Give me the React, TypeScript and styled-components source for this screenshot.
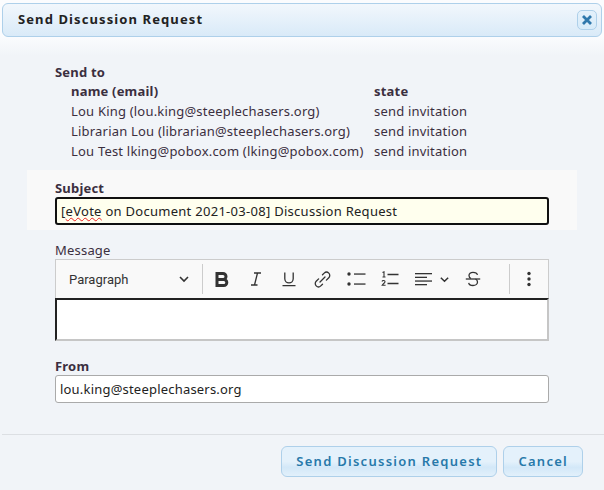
import React from "react";
import styled, { createGlobalStyle } from "styled-components";

const Global = createGlobalStyle`
  html, body { margin: 0; padding: 0; background: #f1f4f8; }
  * { box-sizing: border-box; }
`;

const Dialog = styled.div`
  width: 604px;
  height: 490px;
  overflow: hidden;
  display: flex;
  flex-direction: column;
  padding-top: 3px;
  font-family: "Noto Sans", "Open Sans", sans-serif;
  font-size: 13px;
  letter-spacing: 0.2px;
  color: #3b2f3f;
  background: linear-gradient(#fbfcfe 36px, #f1f4f8 56px);
`;

const TitleBar = styled.header`
  height: 34px;
  margin: 0 2px;
  padding: 0 4px 0 15px;
  display: flex;
  align-items: center;
  justify-content: space-between;
  border: 1px solid #aed0ea;
  border-radius: 6px;
  background: linear-gradient(#f2f7fc, #d9eaf8);
`;

const Title = styled.h1`
  margin: 0 0 2px;
  font-size: 13px;
  font-weight: 700;
  color: #222;
  letter-spacing: 1.1px;
`;

const CloseButton = styled.button`
  width: 20px;
  height: 20px;
  padding: 0;
  display: flex;
  align-items: center;
  justify-content: center;
  border: 1px solid #aed0ea;
  border-radius: 5px;
  background: linear-gradient(#e4f1fb, #d7ebf9);
`;

const Recipients = styled.section`
  padding: 25px 0 0 55px;
  height: 133px;
`;

const SectionLabel = styled.div`
  font-weight: 700;
  line-height: 20px;
  height: 19px;
`;

const RecipientTable = styled.div`
  margin-left: 16px;
  display: grid;
  grid-template-columns: 303px auto;
  grid-auto-rows: 20px;
  line-height: 20px;
`;

const HeadCell = styled.div`
  font-weight: 700;
`;

const Cell = styled.div`
  white-space: nowrap;
`;

const SubjectBand = styled.section`
  margin: 0 27px;
  height: 60px;
  padding: 8px 28px 0;
  background: #f9f9f9;
`;

const FieldLabel = styled.label<{ $bold?: boolean }>`
  display: block;
  height: 19px;
  line-height: 21px;
  font-weight: ${(p) => (p.$bold ? 700 : 400)};
`;

const TextBox = styled.div<{ $focused?: boolean }>`
  height: 28px;
  padding: 0 4px ${(p) => (p.$focused ? 0 : 1)}px;
  display: flex;
  align-items: center;
  white-space: pre;
  color: #222;
  letter-spacing: ${(p) => (p.$focused ? 0.28 : 0.2)}px;
  border-radius: 3px;
  border: ${(p) => (p.$focused ? "2px solid #111" : "1px solid #aaa")};
  background: ${(p) => (p.$focused ? "#ffffee" : "#fff")};
`;

const Misspelled = styled.span`
  text-decoration: underline wavy #e22;
  text-decoration-thickness: 1px;
  text-underline-offset: 1px;
`;

const MessageField = styled.section`
  margin: 10px 55px 0;
`;

const Editor = styled.div`
  height: 82px;
  display: flex;
  flex-direction: column;
`;

const Toolbar = styled.div`
  height: 39px;
  display: flex;
  align-items: center;
  background: #f9f9f9;
  border: 1px solid #ccc;
  border-bottom: 0;
  color: #333;
`;

const BlockSelect = styled.div`
  width: 146px;
  padding: 0 12px 0 13px;
  display: flex;
  align-items: center;
  justify-content: space-between;
  font-size: 13px;
  letter-spacing: 0;
  font-family: Roboto, sans-serif;
`;

const Divider = styled.span`
  width: 1px;
  height: 30px;
  background: #ccc;
`;

const ToolGroup = styled.div`
  display: flex;
  align-items: center;
  width: 307px;
  padding-left: 3px;
`;

const Tool = styled.span<{ $w?: number }>`
  display: flex;
  align-items: center;
  justify-content: center;
  gap: 7px;
  width: ${(p) => p.$w ?? 33.5}px;
  height: 24px;
`;

const Content = styled.div`
  flex: 1;
  background: #fff;
  border-top: 2px solid #222;
  border-left: 2px solid #222;
  border-right: 2px solid #c6c6c6;
  border-bottom: 2px solid #c6c6c6;
`;

const FromField = styled.section`
  margin: 15px 55px 0;
`;

const Footer = styled.footer`
  margin-top: 31px;
  margin-left: 2px;
  padding: 11px 21px 0 0;
  border-top: 1px solid #dcdfe3;
  display: flex;
  justify-content: flex-end;
  gap: 6px;
`;

const ActionButton = styled.button`
  height: 31px;
  padding: 0 14px 2px;
  font: 600 13px "Noto Sans", "Open Sans", sans-serif;
  letter-spacing: 1.27px;
  color: #2779aa;
  border: 1px solid #aed0ea;
  border-radius: 6px;
  background: linear-gradient(#e4f1fb 0%, #e4f1fb 50%, #d3e8f8 70%, #e2f0fb 100%);
`;

const Chevron = ({ size = 12 }: { size?: number }) => (
  <svg width={size} height={size} viewBox="0 0 12 12" fill="none" stroke="#333" strokeWidth="1.6">
    <path d="M2 4l4 4 4-4" />
  </svg>
);

const BoldIcon = () => (
  <svg width="16" height="17" viewBox="0 0 16 17" fill="none" stroke="#333" strokeWidth="3">
    <path d="M3 2.500h6a3 3 0 010 6H3zM3 8.500h6.800a3 3 0 010 6H3z" />
  </svg>
);

const ItalicIcon = () => (
  <svg width="16" height="16" viewBox="0 0 16 16" fill="none" stroke="#333" strokeWidth="1.3">
    <path d="M6 2h7M3 14h6.500M9.500 2L6.500 14" />
  </svg>
);

const UnderlineIcon = () => (
  <svg width="16" height="16" viewBox="0 0 16 16" fill="none" stroke="#333" strokeWidth="1.3">
    <path d="M3.800 1.500v6.200a4.200 4.200 0 008.400 0V1.500M1.500 14.600h13" />
  </svg>
);

const LinkIcon = () => (
  <svg width="17" height="17" viewBox="0 0 17 17" fill="none" stroke="#333" strokeWidth="1.3" strokeLinecap="round">
    <path d="M8.500 3.800l1.700-1.700a3.200 3.200 0 014.600 4.600l-2.400 2.400" />
    <path d="M8.500 13.200l-1.700 1.700a3.200 3.200 0 01-4.600-4.600l2.400-2.400" />
    <path d="M6 11l5-5" />
  </svg>
);

const BulletIcon = () => (
  <svg width="19" height="16" viewBox="0 0 19 16" fill="#333" stroke="none">
    <circle cx="2" cy="3" r="1.700" />
    <circle cx="2" cy="13" r="1.700" />
    <rect x="7" y="2.400" width="11.500" height="1.300" />
    <rect x="7" y="12.400" width="11.500" height="1.300" />
  </svg>
);

const NumberedIcon = () => (
  <svg width="18" height="18" viewBox="0 0 18 18" fill="none" stroke="#333">
    <path d="M6.500 4.500H17.500M6.500 13.500H17.500" strokeWidth="1.300" />
    <path d="M1.500 2.500L3 1.800V7M1.500 7h3" strokeWidth="1.100" />
    <path d="M1 11.500c.4-1.500 3.200-1.300 3 .4-.1 1-1.800 1.800-2.800 3.300H4.600" strokeWidth="1.100" />
  </svg>
);

const AlignIcon = () => (
  <svg width="17" height="14" viewBox="0 0 17 14" fill="#333" stroke="none">
    <rect x="0" y="1" width="17" height="1.300" />
    <rect x="0" y="4.700" width="12" height="1.300" />
    <rect x="0" y="8.400" width="17" height="1.300" />
    <rect x="0" y="12" width="12" height="1.300" />
  </svg>
);

const StrikeIcon = () => (
  <svg width="16" height="16" viewBox="0 0 16 16" fill="none" stroke="#333" strokeWidth="1.300">
    <path d="M12.500 3.800C12 2 10 1.300 8 1.300 5.500 1.300 4 2.800 4 4.500c0 1.300.7 2.500 2 3" />
    <path d="M.8 8h14.400" />
    <path d="M10.500 8c1.200.6 2 1.500 2 3 0 2-2 3.500-4.500 3.500-2.200 0-4-1-4.300-2.700" />
  </svg>
);

const MoreIcon = () => (
  <svg width="6" height="16" viewBox="0 0 6 16" fill="#333">
    <circle cx="3" cy="2.500" r="1.700" />
    <circle cx="3" cy="8" r="1.700" />
    <circle cx="3" cy="13.500" r="1.700" />
  </svg>
);

const CloseIcon = () => (
  <svg width="10" height="10" viewBox="0 0 10 10" fill="none" stroke="#2f78ac" strokeWidth="2.800">
    <path d="M1 1l8 8M9 1l-8 8" />
  </svg>
);

const recipients = [
  "Lou King (lou.king@steeplechasers.org)",
  "Librarian Lou (librarian@steeplechasers.org)",
  "Lou Test lking@pobox.com (lking@pobox.com)",
];

export default function App() {
  return (
    <Dialog>
      <Global />
      <TitleBar>
        <Title>Send Discussion Request</Title>
        <CloseButton aria-label="Close">
          <CloseIcon />
        </CloseButton>
      </TitleBar>
      <Recipients>
        <SectionLabel>Send to</SectionLabel>
        <RecipientTable>
          <HeadCell>name (email)</HeadCell>
          <HeadCell>state</HeadCell>
          {recipients.map((r) => (
            <React.Fragment key={r}>
              <Cell>{r}</Cell>
              <Cell>send invitation</Cell>
            </React.Fragment>
          ))}
        </RecipientTable>
      </Recipients>
      <SubjectBand>
        <FieldLabel $bold>Subject</FieldLabel>
        <TextBox $focused>
          [<Misspelled>eVote</Misspelled> on Document 2021-03-08] Discussion Request
        </TextBox>
      </SubjectBand>
      <MessageField>
        <FieldLabel>Message</FieldLabel>
        <Editor>
          <Toolbar>
            <BlockSelect>
              Paragraph
              <Chevron />
            </BlockSelect>
            <Divider />
            <ToolGroup>
              <Tool><BoldIcon /></Tool>
              <Tool><ItalicIcon /></Tool>
              <Tool><UnderlineIcon /></Tool>
              <Tool><LinkIcon /></Tool>
              <Tool><BulletIcon /></Tool>
              <Tool><NumberedIcon /></Tool>
              <Tool $w={51.5}>
                <AlignIcon />
                <Chevron size={11} />
              </Tool>
              <Tool $w={29}><StrikeIcon /></Tool>
            </ToolGroup>
            <Divider />
            <Tool $w={38}><MoreIcon /></Tool>
          </Toolbar>
          <Content />
        </Editor>
      </MessageField>
      <FromField>
        <FieldLabel $bold>From</FieldLabel>
        <TextBox>lou.king@steeplechasers.org</TextBox>
      </FromField>
      <Footer>
        <ActionButton>Send Discussion Request</ActionButton>
        <ActionButton>Cancel</ActionButton>
      </Footer>
    </Dialog>
  );
}
